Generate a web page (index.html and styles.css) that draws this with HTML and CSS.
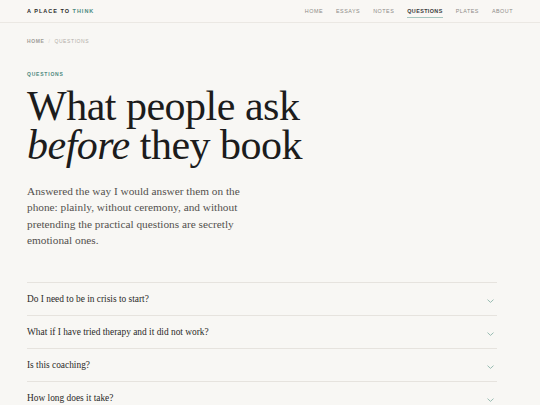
FILE: index.html
```html
<!DOCTYPE html>
<html lang="en">
<head>
<meta charset="utf-8">
<title>Questions — A Place to Think</title>
<link rel="stylesheet" href="styles.css">
</head>
<body>
<header class="site-header">
  <div class="logo">A PLACE TO <span class="accent">THINK</span></div>
  <nav class="nav">
    <a href="#">HOME</a>
    <a href="#">ESSAYS</a>
    <a href="#">NOTES</a>
    <a href="#" class="active">QUESTIONS</a>
    <a href="#">PLATES</a>
    <a href="#">ABOUT</a>
  </nav>
</header>
<main class="main">
  <div class="crumbs"><span class="crumb-home">HOME</span><span class="sep">/</span><span>QUESTIONS</span></div>
  <div class="eyebrow">QUESTIONS</div>
  <h1 class="title"><span class="line">What people ask</span><span class="line"><em>before</em> they book</span></h1>
  <p class="lede">Answered the way I would answer them on the phone: plainly, without ceremony, and without pretending the practical questions are secretly emotional ones.</p>
  <ul class="faq">
    <li class="faq-item"><span>Do I need to be in crisis to start?</span><svg class="chev" viewBox="0 0 7 4" width="7" height="4"><path d="M0.5 0.6 L3.5 3.4 L6.5 0.6" fill="none" stroke="#8fb5ab" stroke-width="0.9"/></svg></li>
    <li class="faq-item"><span>What if I have tried therapy and it did not work?</span><svg class="chev" viewBox="0 0 7 4" width="7" height="4"><path d="M0.5 0.6 L3.5 3.4 L6.5 0.6" fill="none" stroke="#8fb5ab" stroke-width="0.9"/></svg></li>
    <li class="faq-item"><span>Is this coaching?</span><svg class="chev" viewBox="0 0 7 4" width="7" height="4"><path d="M0.5 0.6 L3.5 3.4 L6.5 0.6" fill="none" stroke="#8fb5ab" stroke-width="0.9"/></svg></li>
    <li class="faq-item"><span>How long does it take?</span><svg class="chev" viewBox="0 0 7 4" width="7" height="4"><path d="M0.5 0.6 L3.5 3.4 L6.5 0.6" fill="none" stroke="#8fb5ab" stroke-width="0.9"/></svg></li>
  </ul>
</main>
</body>
</html>
```
FILE: styles.css
```css
* { box-sizing: border-box; }
html, body { margin: 0; padding: 0; }
body {
  background: #f8f7f4;
  color: #1d1d1d;
  font-family: "Liberation Serif", Georgia, serif;
  width: 540px;
  height: 405px;
  overflow: hidden;
}
.site-header {
  height: 23px;
  border-bottom: 1px solid #ebe8e3;
  background: #f9f7f4;
  display: flex;
  align-items: center;
  justify-content: space-between;
  padding: 0 27px;
}
.logo {
  font-family: "Liberation Sans", Arial, sans-serif;
  font-size: 5.5px;
  font-weight: 700;
  letter-spacing: 1px;
  color: #2a2a2a;
}
.accent { color: #4b8a80; }
.nav {
  display: flex;
  gap: 13px;
  height: 100%;
  align-items: center;
}
.nav a {
  font-family: "Liberation Sans", Arial, sans-serif;
  font-size: 5.4px;
  letter-spacing: 0.5px;
  color: #8e8b87;
  text-decoration: none;
  position: relative;
}
.nav a.active {
  color: #3a3a3a;
  font-weight: 700;
  letter-spacing: 0.4px;
}
.nav a.active::after {
  content: "";
  position: absolute;
  left: 0;
  right: 0;
  bottom: -4px;
  height: 1px;
  background: #a6c6bf;
}
.main {
  padding: 0 43px 0 27px;
}
.crumbs {
  margin-top: 15px;
  font-family: "Liberation Sans", Arial, sans-serif;
  font-size: 5px;
  letter-spacing: 0.6px;
  color: #b2aea9;
  display: flex;
  gap: 4px;
}
.crumb-home { color: #a09c97; font-weight: 700; }
.sep { color: #d3d0cb; }
.eyebrow {
  margin-top: 27px;
  font-family: "Liberation Sans", Arial, sans-serif;
  font-size: 5px;
  font-weight: 700;
  letter-spacing: 0.8px;
  color: #4f8a80;
}
.title {
  margin: 10px 0 0;
  font-weight: 400;
  font-size: 42px;
  line-height: 39px;
  letter-spacing: -0.5px;
  color: #1c1c1c;
}
.title .line { display: block; }
.title em { font-style: italic; }
.lede {
  margin: 18px 0 0;
  width: 238px;
  font-size: 11.3px;
  line-height: 16.3px;
  color: #53514e;
}
.faq {
  list-style: none;
  margin: 34px 0 0;
  padding: 0;
  border-top: 1px solid #e6e3de;
}
.faq-item {
  height: 33px;
  border-bottom: 1px solid #e6e3de;
  display: flex;
  align-items: center;
  justify-content: space-between;
  padding-right: 3px;
  font-size: 9.4px;
  color: #2b2a28;
}
.chev { display: block; margin-top: 3px; }
```
